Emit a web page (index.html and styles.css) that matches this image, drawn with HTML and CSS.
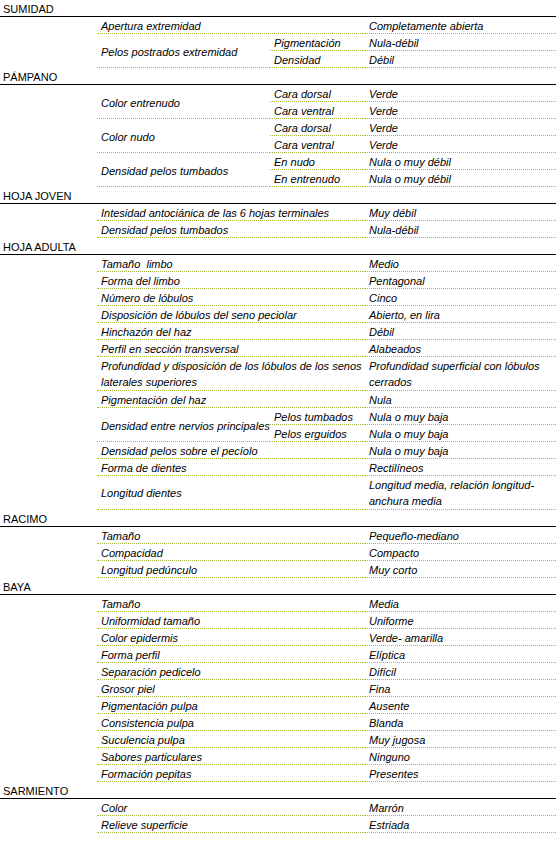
FILE: index.html
```html
<!DOCTYPE html>
<html lang="es">
<head>
<meta charset="utf-8">
<title>Ficha ampelográfica</title>
<link rel="stylesheet" href="styles.css">
</head>
<body>
<table class="ficha">
<colgroup><col class="c1"><col class="c2"><col class="c3"><col class="c4"></colgroup>
<tbody>
<tr><td colspan="4" class="sec">SUMIDAD</td></tr>
<tr><td class="e"></td><td colspan="2" class="d">Apertura extremidad</td><td class="d">Completamente abierta</td></tr>
<tr><td class="e"></td><td rowspan="2" class="d">Pelos postrados extremidad</td><td class="d">Pigmentación</td><td class="d">Nula-débil</td></tr>
<tr><td class="e"></td><td class="d">Densidad</td><td class="d">Débil</td></tr>

<tr><td colspan="4" class="sec">PÁMPANO</td></tr>
<tr><td class="e"></td><td rowspan="2" class="d">Color entrenudo</td><td class="d">Cara dorsal</td><td class="d">Verde</td></tr>
<tr><td class="e"></td><td class="d">Cara ventral</td><td class="d">Verde</td></tr>
<tr><td class="e"></td><td rowspan="2" class="d">Color nudo</td><td class="d">Cara dorsal</td><td class="d">Verde</td></tr>
<tr><td class="e"></td><td class="d">Cara ventral</td><td class="d">Verde</td></tr>
<tr><td class="e"></td><td rowspan="2" class="d">Densidad pelos tumbados</td><td class="d">En nudo</td><td class="d">Nula o muy débil</td></tr>
<tr><td class="e"></td><td class="d">En entrenudo</td><td class="d">Nula o muy débil</td></tr>

<tr><td colspan="4" class="sec">HOJA JOVEN</td></tr>
<tr><td class="e"></td><td colspan="2" class="d">Intesidad antociánica de las 6 hojas terminales</td><td class="d">Muy débil</td></tr>
<tr><td class="e"></td><td colspan="2" class="d">Densidad pelos tumbados</td><td class="d">Nula-débil</td></tr>

<tr><td colspan="4" class="sec">HOJA ADULTA</td></tr>
<tr><td class="e"></td><td colspan="2" class="d">Tamaño&nbsp; limbo</td><td class="d">Medio</td></tr>
<tr><td class="e"></td><td colspan="2" class="d">Forma del limbo</td><td class="d">Pentagonal</td></tr>
<tr><td class="e"></td><td colspan="2" class="d">Número de lóbulos</td><td class="d">Cinco</td></tr>
<tr><td class="e"></td><td colspan="2" class="d">Disposición de lóbulos del seno peciolar</td><td class="d">Abierto, en lira</td></tr>
<tr><td class="e"></td><td colspan="2" class="d">Hinchazón del haz</td><td class="d">Débil</td></tr>
<tr><td class="e"></td><td colspan="2" class="d">Perfil en sección transversal</td><td class="d">Alabeados</td></tr>
<tr><td class="e"></td><td colspan="2" class="d w">Profundidad y disposición de los lóbulos de los senos laterales superiores</td><td class="d w">Profundidad superficial con lóbulos cerrados</td></tr>
<tr><td class="e"></td><td colspan="2" class="d">Pigmentación del haz</td><td class="d">Nula</td></tr>
<tr><td class="e"></td><td rowspan="2" class="d">Densidad entre nervios principales</td><td class="d">Pelos tumbados</td><td class="d">Nula o muy baja</td></tr>
<tr><td class="e"></td><td class="d">Pelos erguidos</td><td class="d">Nula o muy baja</td></tr>
<tr><td class="e"></td><td colspan="2" class="d">Densidad pelos sobre el pecíolo</td><td class="d">Nula o muy baja</td></tr>
<tr><td class="e"></td><td colspan="2" class="d">Forma de dientes</td><td class="d">Rectilíneos</td></tr>
<tr><td class="e"></td><td colspan="2" class="d w">Longitud dientes</td><td class="d w">Longitud media, relación longitud-anchura media</td></tr>

<tr><td colspan="4" class="sec">RACIMO</td></tr>
<tr><td class="e"></td><td colspan="2" class="d">Tamaño</td><td class="d">Pequeño-mediano</td></tr>
<tr><td class="e"></td><td colspan="2" class="d">Compacidad</td><td class="d">Compacto</td></tr>
<tr><td class="e"></td><td colspan="2" class="d">Longitud pedúnculo</td><td class="d">Muy corto</td></tr>

<tr><td colspan="4" class="sec">BAYA</td></tr>
<tr><td class="e"></td><td colspan="2" class="d">Tamaño</td><td class="d">Media</td></tr>
<tr><td class="e"></td><td colspan="2" class="d">Uniformidad tamaño</td><td class="d">Uniforme</td></tr>
<tr><td class="e"></td><td colspan="2" class="d">Color epidermis</td><td class="d">Verde- amarilla</td></tr>
<tr><td class="e"></td><td colspan="2" class="d">Forma perfil</td><td class="d">Elíptica</td></tr>
<tr><td class="e"></td><td colspan="2" class="d">Separación pedicelo</td><td class="d">Difícil</td></tr>
<tr><td class="e"></td><td colspan="2" class="d">Grosor piel</td><td class="d">Fina</td></tr>
<tr><td class="e"></td><td colspan="2" class="d">Pigmentación pulpa</td><td class="d">Ausente</td></tr>
<tr><td class="e"></td><td colspan="2" class="d">Consistencia pulpa</td><td class="d">Blanda</td></tr>
<tr><td class="e"></td><td colspan="2" class="d">Suculencia pulpa</td><td class="d">Muy jugosa</td></tr>
<tr><td class="e"></td><td colspan="2" class="d">Sabores particulares</td><td class="d">Ninguno</td></tr>
<tr><td class="e"></td><td colspan="2" class="d">Formación pepitas</td><td class="d">Presentes</td></tr>

<tr><td colspan="4" class="sec">SARMIENTO</td></tr>
<tr><td class="e"></td><td colspan="2" class="d">Color</td><td class="d">Marrón</td></tr>
<tr><td class="e"></td><td colspan="2" class="d">Relieve superficie</td><td class="d">Estriada</td></tr>
</tbody>
</table>
</body>
</html>
```
FILE: styles.css
```css
html, body {
  margin: 0;
  padding: 0;
  background: #ffffff;
}

.ficha {
  width: 556px;
  table-layout: fixed;
  border-collapse: separate;
  border-spacing: 0;
  font-family: "Liberation Sans", Arial, sans-serif;
  font-size: 11px;
  color: #000000;
}

.c1 { width: 97px; }
.c2 { width: 173px; }
.c3 { width: 95px; }
.c4 { width: 191px; }

.ficha td {
  padding: 2px 0 0 0;
  line-height: 14px;
  vertical-align: middle;
  text-align: left;
}

.ficha td.sec {
  padding-left: 3px;
  border-bottom: 1px solid #000000;
  font-style: normal;
}

.ficha td.e {
  border: none;
}

.ficha td.d {
  padding-left: 4px;
  font-style: italic;
  border-bottom: 1px dotted #a6b93c;
}

.ficha td.w {
  padding-top: 1px;
  line-height: 16px;
}
```
